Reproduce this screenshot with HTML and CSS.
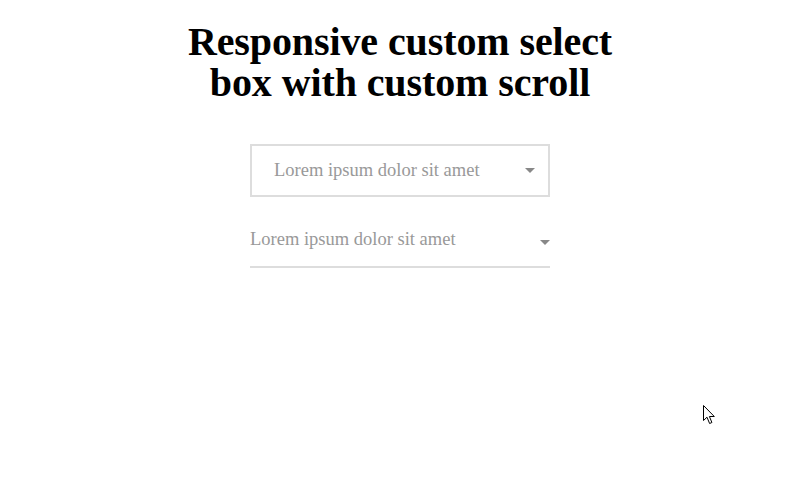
FILE: index.html
```html
<!DOCTYPE html>
<html>
<head>
<meta charset="utf-8">
<link rel="stylesheet" href="styles.css">
</head>
<body>
<main class="page">
  <h1 class="title">Responsive custom select<br>box with custom scroll</h1>
  <div class="select boxed">
    <span class="label">Lorem ipsum dolor sit amet</span>
    <span class="arrow"></span>
  </div>
  <div class="select underline">
    <span class="label">Lorem ipsum dolor sit amet</span>
    <span class="arrow"></span>
  </div>
</main>
<svg class="cursor" width="13" height="20" viewBox="0 0 13 20">
  <path d="M0.5 0.5 L0.5 15.5 L4 12.2 L6.6 18.5 L8.9 17.5 L6.4 11.5 L11.3 11.5 Z" fill="#fff" stroke="#000" stroke-width="1"/>
</svg>
</body>
</html>
```
FILE: styles.css
```css
html, body {
  margin: 0;
  padding: 0;
  background: #fff;
}
.page {
  display: flex;
  flex-direction: column;
  align-items: center;
  padding-top: 21px;
  padding-left: 10px;
  font-family: "Liberation Serif", "DejaVu Serif", serif;
}
.title {
  margin: 0;
  font-size: 40px;
  line-height: 41px;
  font-weight: bold;
  text-align: center;
  color: #000;
  letter-spacing: -0.1px;
}
.select {
  width: 300px;
  box-sizing: border-box;
  display: flex;
  align-items: center;
  justify-content: space-between;
  color: #999;
  font-size: 18.5px;
}
.boxed {
  margin-top: 41px;
  height: 53px;
  border: 2px solid #ddd;
  padding: 0 13px 0 22px;
}
.underline {
  margin-top: 24px;
  height: 47px;
  border-bottom: 2px solid #ddd;
  padding: 0 0 8px 0;
}
.arrow {
  width: 0;
  height: 0;
  border-left: 5px solid transparent;
  border-right: 5px solid transparent;
  border-top: 5px solid #888;
}
.underline .arrow {
  margin-top: 6px;
}
.cursor {
  position: absolute;
  left: 703px;
  top: 405px;
}
```
